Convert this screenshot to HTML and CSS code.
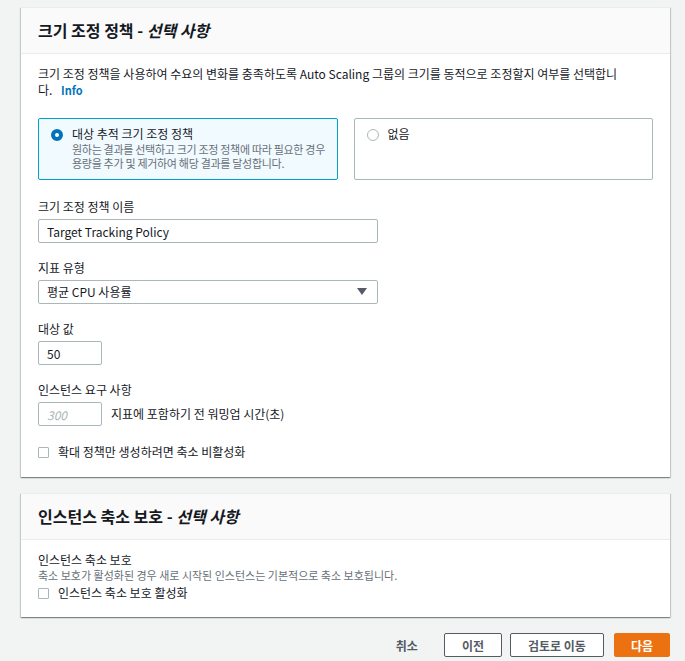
FILE: index.html
```html
<!DOCTYPE html>
<html>
<head>
  <title>크기 조정 정책</title>
  <link rel="stylesheet" href="styles.css">
</head>
<body>
  <div class="page">
    <!-- Scaling policy -->
    <div class="panel">
      <div class="panel-header">
        <h2 class="panel-title">크기 조정 정책 - <em>선택 사항</em></h2>
      </div>
      <div class="panel-body">
        <p class="intro">크기 조정 정책을 사용하여 수요의 변화를 충족하도록 Auto Scaling 그룹의 크기를 동적으로 조정할지 여부를 선택합니다. <a href="#" class="info">Info</a></p>

        <div class="tiles">
          <div class="tile selected">
            <span class="radio on"></span>
            <div class="tile-text">
              <div class="tile-title">대상 추적 크기 조정 정책</div>
              <div class="tile-desc">원하는 결과를 선택하고 크기 조정 정책에 따라 필요한 경우<br>용량을 추가 및 제거하여 해당 결과를 달성합니다.</div>
            </div>
          </div>
          <div class="tile">
            <span class="radio"></span>
            <div class="tile-text">
              <div class="tile-title">없음</div>
            </div>
          </div>
        </div>

        <div class="field">
          <div class="label">크기 조정 정책 이름</div>
          <input class="input wide" type="text" value="Target Tracking Policy">
        </div>

        <div class="field">
          <div class="label">지표 유형</div>
          <div class="select wide">
            <span>평균 CPU 사용률</span>
            <svg width="10" height="8" viewBox="0 0 10 8"><path d="M0 0 H10 L5 7 Z" fill="#545b64"/></svg>
          </div>
        </div>

        <div class="field">
          <div class="label">대상 값</div>
          <input class="input small" type="text" value="50">
        </div>

        <div class="field">
          <div class="label">인스턴스 요구 사항</div>
          <div class="inline-row">
            <input class="input small" type="text" placeholder="300">
            <span class="after-text">지표에 포함하기 전 워밍업 시간(초)</span>
          </div>
        </div>

        <div class="check-row first">
          <span class="checkbox"></span>
          <span>확대 정책만 생성하려면 축소 비활성화</span>
        </div>
      </div>
    </div>

    <!-- Instance scale-in protection -->
    <div class="panel">
      <div class="panel-header">
        <h2 class="panel-title">인스턴스 축소 보호 - <em>선택 사항</em></h2>
      </div>
      <div class="panel-body compact">
        <div class="label-plain">인스턴스 축소 보호</div>
        <div class="hint">축소 보호가 활성화된 경우 새로 시작된 인스턴스는 기본적으로 축소 보호됩니다.</div>
        <div class="check-row">
          <span class="checkbox"></span>
          <span>인스턴스 축소 보호 활성화</span>
        </div>
      </div>
    </div>

    <div class="actions">
      <button class="link-btn">취소</button>
      <button class="btn">이전</button>
      <button class="btn">검토로 이동</button>
      <button class="btn primary">다음</button>
    </div>
  </div>
</body>
</html>
```

FILE: styles.css
```css
body {
  margin: 0;
  padding: 0;
  background-color: #f2f3f3;
  color: #16191f;
  font-family: "Noto Sans CJK KR", "Noto Sans", sans-serif;
  font-size: 12px;
  line-height: 16px;
}

.page {
  padding: 7px 15px 0 21px;
}

.panel {
  background-color: white;
  box-shadow: 0 1px 1px 0 rgba(0,28,36,0.3), 1px 1px 1px 0 rgba(0,28,36,0.15), -1px 1px 1px 0 rgba(0,28,36,0.15);
  border-top: 1px solid #eaeded;
  margin-bottom: 16px;
}

.panel-header {
  background-color: #fafafa;
  border-bottom: 1px solid #eaeded;
  padding: 11px 17px 12px;
}

.panel-title {
  margin: 0;
  font-size: 16px;
  line-height: 22px;
  font-weight: bold;
}

.panel-title em {
  font-style: italic;
}

.panel-body {
  padding: 12px 17px 17px;
}

.panel-body.compact {
  padding: 12px 17px 16px;
}

.intro {
  margin: 0;
  max-width: 592px;
}

.info {
  color: #0073bb;
  font-weight: bold;
  font-size: 11px;
  text-decoration: none;
  margin-left: 6px;
}

.tiles {
  display: flex;
  gap: 16px;
  margin-top: 20px;
}

.tile {
  width: 300px;
  height: 62px;
  box-sizing: border-box;
  border: 1px solid #aab7b8;
  border-radius: 2px;
  display: flex;
  align-items: flex-start;
  padding: 7px 8px 0 12px;
}

.tile.selected {
  border-color: #00a1c9;
  background-color: #f1faff;
}

.radio {
  width: 12px;
  height: 12px;
  box-sizing: border-box;
  border: 1px solid #aab7b8;
  border-radius: 50%;
  background-color: white;
  margin-top: 3px;
  flex-shrink: 0;
}

.radio.on {
  border: 4px solid #0073bb;
}

.tile-text {
  margin-left: 9px;
}

.tile-title {
  line-height: 16px;
}

.tile-desc {
  color: #687078;
  font-size: 11px;
  line-height: 14px;
  letter-spacing: -0.3px;
  white-space: nowrap;
}

.field {
  margin-top: 17px;
}

.tiles + .field {
  margin-top: 19px;
}

.label {
  margin-bottom: 4px;
}

.input, .select {
  height: 24px;
  box-sizing: border-box;
  border: 1px solid #aab7b8;
  border-radius: 2px;
  padding: 0 8px;
  font-family: inherit;
  font-size: 12px;
  color: #16191f;
  background-color: white;
  outline: none;
}

.input::placeholder {
  color: #aab7b8;
  font-style: italic;
}

.wide {
  width: 340px;
}

.small {
  width: 64px;
}

.select {
  display: flex;
  align-items: center;
  justify-content: space-between;
  padding-right: 10px;
}

.inline-row {
  display: flex;
  align-items: center;
}

.after-text {
  margin-left: 9px;
}

.check-row {
  display: flex;
  align-items: center;
  gap: 9px;
  margin-top: 3px;
}

.check-row.first {
  margin-top: 18px;
}

.checkbox {
  width: 11px;
  height: 11px;
  box-sizing: border-box;
  border: 1px solid #aab7b8;
  border-radius: 1px;
  background-color: white;
}

.label-plain {
  line-height: 16px;
}

.hint {
  color: #687078;
  font-size: 11px;
  line-height: 14px;
}

.actions {
  display: flex;
  justify-content: flex-end;
  align-items: center;
  gap: 8px;
}

.btn, .link-btn {
  height: 24px;
  font-family: inherit;
  font-size: 12px;
  font-weight: bold;
  color: #545b64;
  cursor: pointer;
}

.btn {
  background-color: white;
  border: 1px solid #545b64;
  border-radius: 2px;
  padding: 0 17px;
}

.link-btn {
  background: none;
  border: none;
  padding: 0 18px;
}

.btn.primary {
  background-color: #ec7211;
  border-color: #ec7211;
  color: white;
  padding: 0 16px;
  margin-left: 2px;
}
```
